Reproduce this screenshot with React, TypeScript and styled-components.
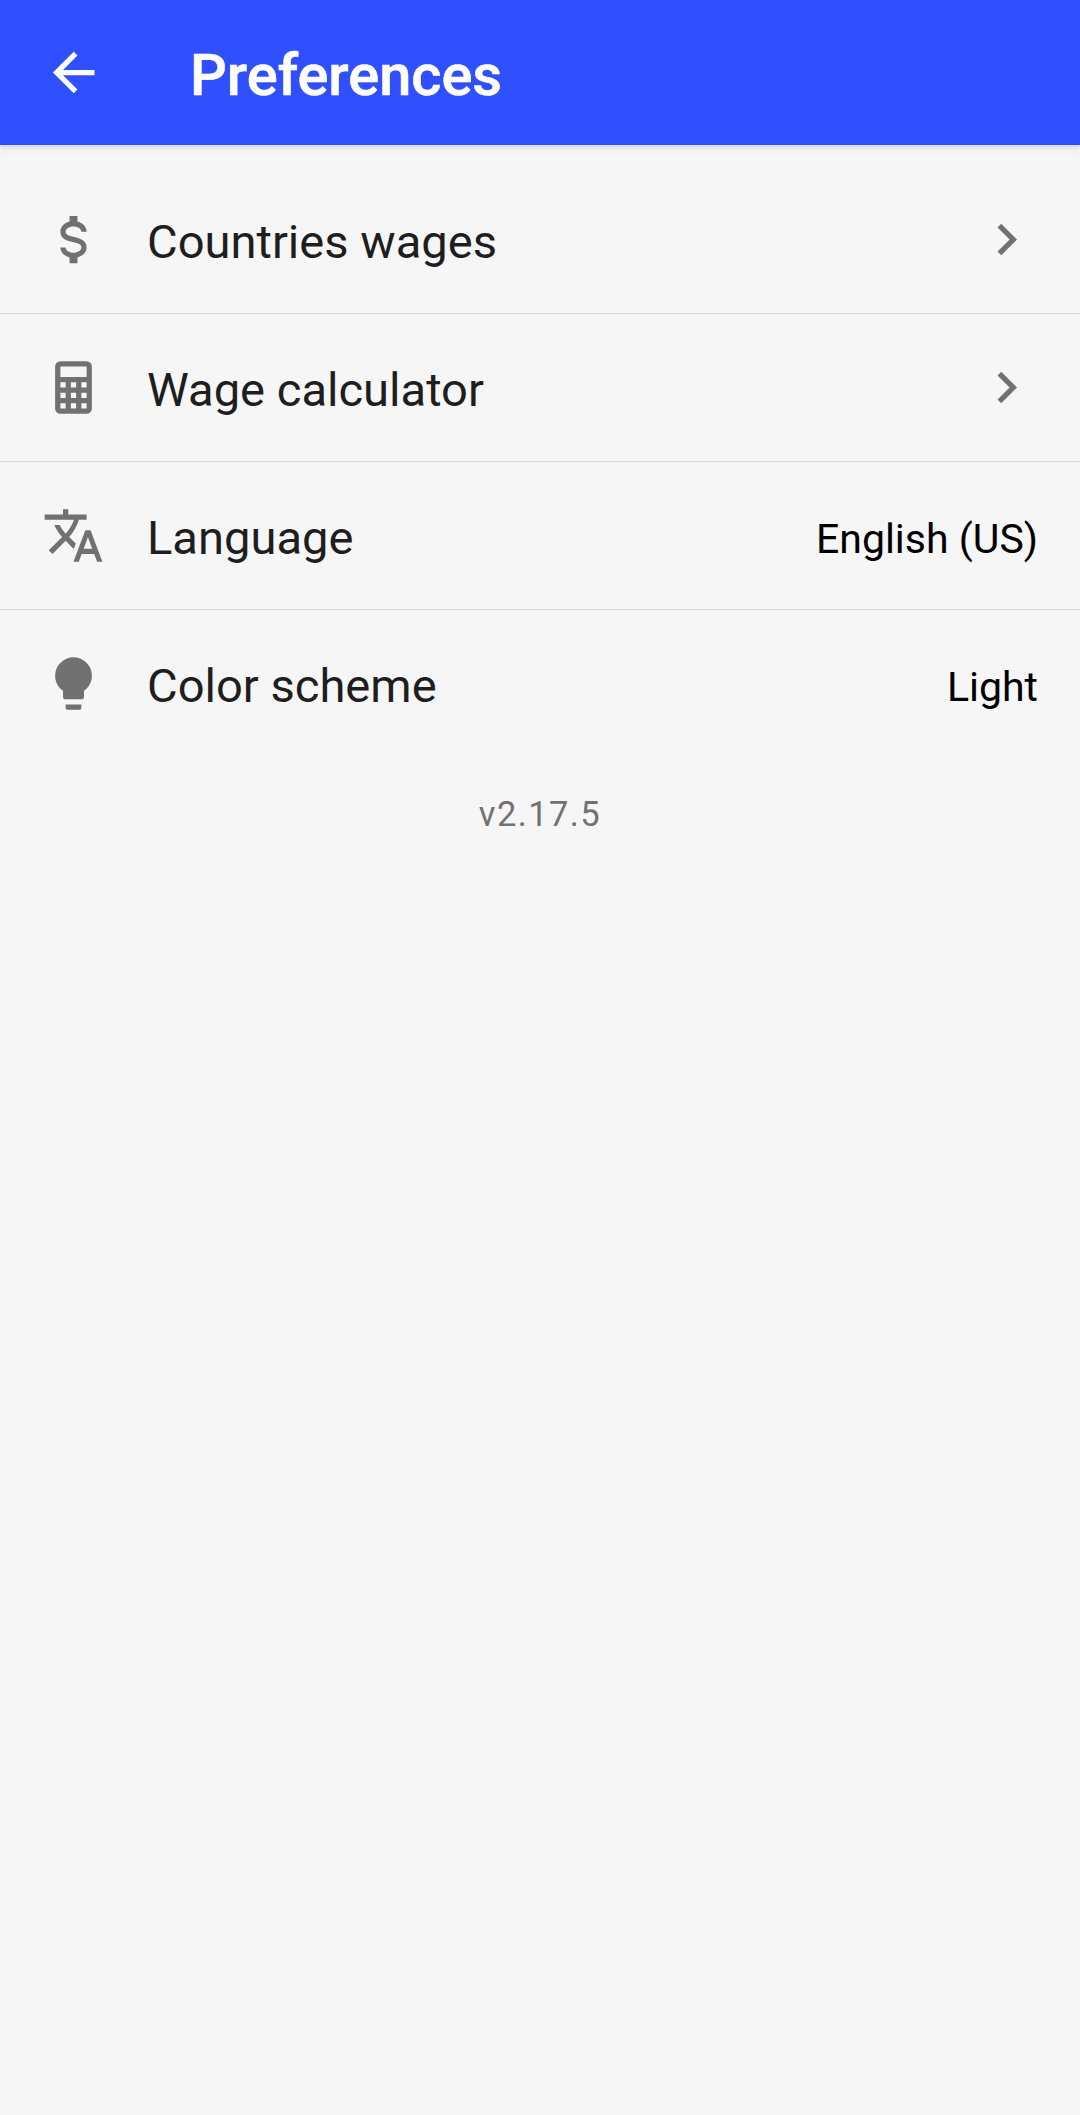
import React from "react";
import styled, { createGlobalStyle } from "styled-components";

const GlobalStyle = createGlobalStyle`
  body {
    margin: 0;
    background: #f6f6f6;
  }
`;

const Screen = styled.div`
  min-height: 2115px;
  background: #f6f6f6;
  font-family: Roboto, sans-serif;
`;

const AppBar = styled.header`
  display: flex;
  align-items: center;
  gap: 85px;
  height: 145px;
  padding-left: 42px;
  box-sizing: border-box;
  background: #304ffe;
  color: #fff;
  box-shadow: 0 2px 4px rgba(0, 0, 0, 0.1), 0 5px 9px rgba(0, 0, 0, 0.05);
`;

const Title = styled.h1`
  margin: 0;
  padding-top: 4px;
  font-size: 57.75px;
  line-height: 72px;
  font-weight: 500;
  -webkit-text-stroke: 0.6px currentColor;
`;

const Icon = styled.svg`
  display: block;
  flex: none;
  width: 63px;
  height: 63px;
  fill: currentColor;
`;

const List = styled.ul`
  margin: 0;
  padding: 21px 0 0;
  list-style: none;
`;

const Row = styled.li`
  display: flex;
  align-items: center;
  height: 148px;
  padding: 0 42px;
  box-sizing: border-box;
  color: #717171;
  border-bottom: 1px solid #d9dada;

  &:last-child {
    border-bottom-color: transparent;
  }
`;

const Label = styled.span`
  flex: 1;
  margin-left: 42px;
  padding-top: 4px;
  font-size: 47.1px;
  line-height: 60px;
  color: #1e1e1e;
`;

const Value = styled.span`
  padding-top: 7px;
  font-size: 41px;
  line-height: 52px;
  color: #000;
`;

const Version = styled.p`
  margin: 0;
  padding-top: 34px;
  font-size: 34.5px;
  line-height: 44px;
  letter-spacing: 1.4px;
  text-align: center;
  color: #717171;
`;

const paths = {
  back: "M20,11V13H8L13.5,18.5L12.08,19.92L4.16,12L12.08,4.08L13.5,5.5L8,11H20Z",
  dollar:
    "M7,15H9C9,16.08 10.37,17 12,17C13.63,17 15,16.08 15,15C15,13.9 13.96,13.5 11.76,12.97C9.64,12.44 7,11.78 7,9C7,7.21 8.47,5.69 10.5,5.18V3H13.5V5.18C15.53,5.69 17,7.21 17,9H15C15,7.92 13.63,7 12,7C10.37,7 9,7.92 9,9C9,10.1 10.04,10.5 12.24,11.03C14.36,11.56 17,12.22 17,15C17,16.79 15.53,18.31 13.5,18.82V21H10.5V18.82C8.47,18.31 7,16.79 7,15Z",
  calculator:
    "M7,2H17A2,2 0 0,1 19,4V20A2,2 0 0,1 17,22H7A2,2 0 0,1 5,20V4A2,2 0 0,1 7,2M7,4V8H17V4H7M7,10V12H9V10H7M11,10V12H13V10H11M15,10V12H17V10H15M7,14V16H9V14H7M11,14V16H13V14H11M15,14V16H17V14H15M7,18V20H9V18H7M11,18V20H13V18H11M15,18V20H17V18H15Z",
  translate:
    "M12.87,15.07L10.33,12.56L10.36,12.53C12.1,10.59 13.34,8.36 14.07,6H17V4H10V2H8V4H1V6H12.17C11.5,7.92 10.44,9.75 9,11.35C8.07,10.32 7.3,9.19 6.69,8H4.69C5.42,9.63 6.42,11.17 7.67,12.56L2.58,17.58L4,19L9,14L12.11,17.11L12.87,15.07M18.5,10H16.5L12,22H14L15.12,19H19.87L21,22H23L18.5,10M15.88,17L17.5,12.67L19.12,17H15.88Z",
  bulb: "M12,2A7,7 0 0,0 5,9C5,11.38 6.19,13.47 8,14.74V17A1,1 0 0,0 9,18H15A1,1 0 0,0 16,17V14.74C17.81,13.47 19,11.38 19,9A7,7 0 0,0 12,2M9,21A1,1 0 0,0 10,22H14A1,1 0 0,0 15,21V20H9V21Z",
  chevron: "M8.59,16.58L13.17,12L8.59,7.41L10,6L16,12L10,18L8.59,16.58Z",
};

const Glyph = ({ name }: { name: keyof typeof paths }) => (
  <Icon viewBox="0 0 24 24" aria-hidden="true">
    <path fillRule="evenodd" d={paths[name]} />
  </Icon>
);

const items: { icon: keyof typeof paths; label: string; value?: string }[] = [
  { icon: "dollar", label: "Countries wages" },
  { icon: "calculator", label: "Wage calculator" },
  { icon: "translate", label: "Language", value: "English (US)" },
  { icon: "bulb", label: "Color scheme", value: "Light" },
];

export default function App() {
  return (
    <Screen>
      <GlobalStyle />
      <AppBar>
        <Glyph name="back" />
        <Title>Preferences</Title>
      </AppBar>
      <List>
        {items.map(({ icon, label, value }) => (
          <Row key={label}>
            <Glyph name={icon} />
            <Label>{label}</Label>
            {value ? <Value>{value}</Value> : <Glyph name="chevron" />}
          </Row>
        ))}
      </List>
      <Version>v2.17.5</Version>
    </Screen>
  );
}
